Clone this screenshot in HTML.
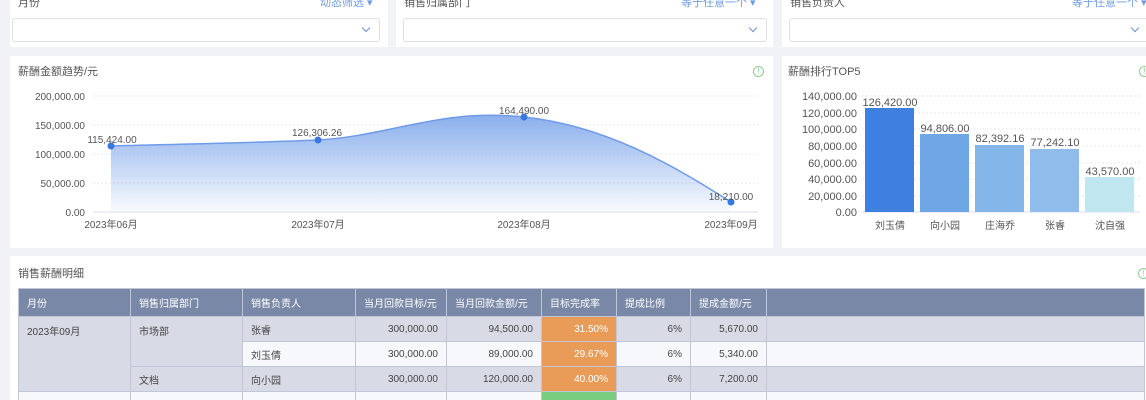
<!DOCTYPE html>
<html style="width:1146px;height:400px;overflow:hidden"><head><meta charset="utf-8"><style>
*{margin:0;padding:0;box-sizing:border-box}
body{width:1146px;height:400px;overflow:hidden;background:#f0f2f5;font-family:"Liberation Sans","Noto Sans CJK SC",sans-serif;position:relative;color:#333}
.card{position:absolute;background:#fff}
.a{position:absolute;white-space:nowrap}
.sel{position:absolute;height:24px;border:1px solid #dcdfe6;border-radius:3px;background:#fff}
.sel::after{content:"";position:absolute;right:10px;top:6px;width:5px;height:5px;border-right:1.5px solid #6b8fd6;border-bottom:1.5px solid #6b8fd6;transform:rotate(45deg)}
.t{font-size:11px;color:#555}
.blue{color:#6f9be0;font-size:11px}
.info{position:absolute;width:11px;height:11px;border:1.3px solid #8ccf8c;border-radius:50%;font-size:8px;color:#8ccf8c;text-align:center;line-height:9px}
table{position:absolute;left:18px;top:288px;border-collapse:collapse;font-size:10px;color:#444}
td{border:1px solid #c0c6d6;height:25px;padding:0 8px;vertical-align:middle}
th{background:#7a88a8;color:#fff;font-weight:normal;text-align:left;height:28px;padding:0 8px;border:1px solid #c0c6d6}
.g{background:#d8dbe6}.w{background:#f7f8fb}
.r{text-align:right}
.o{background:#e89c58;color:#fff;text-align:right}
</style></head><body>
<div class="card" style="left:10px;top:0;width:378px;height:47px">
<div class="a t" style="left:8px;top:-6px">月份</div><div class="a blue" style="left:310px;top:-6px">动态筛选 ▾</div>
<div class="sel" style="left:2px;top:18px;width:368px"></div></div>
<div class="card" style="left:396px;top:0;width:377px;height:47px">
<div class="a t" style="left:8px;top:-6px">销售归属部门</div><div class="a blue" style="left:285px;top:-6px">等于任意一个 ▾</div>
<div class="sel" style="left:7px;top:18px;width:364px"></div></div>
<div class="card" style="left:782px;top:0;width:364px;height:47px">
<div class="a t" style="left:8px;top:-6px">销售负责人</div><div class="a blue" style="left:290px;top:-6px">等于任意一个 ▾</div>
<div class="sel" style="left:7px;top:18px;width:360px"></div></div>

<div class="card" style="left:10px;top:56px;width:763px;height:192px">
<div class="a t" style="left:8px;top:7px">薪酬金额趋势/元</div><div class="info" style="left:743px;top:10px">!</div></div>
<div class="card" style="left:782px;top:56px;width:364px;height:192px">
<div class="a t" style="left:6px;top:7px">薪酬排行TOP5</div><div class="info" style="left:357px;top:10px">!</div></div>

<svg class="a" style="left:0;top:0" width="1146" height="250" font-family="Liberation Sans, Noto Sans CJK SC, sans-serif" font-size="10" fill="#555">
<defs><linearGradient id="gr" x1="0" y1="0" x2="0" y2="1"><stop offset="0" stop-color="#7ea6ea" stop-opacity=".9"/><stop offset="1" stop-color="#7ea6ea" stop-opacity=".05"/></linearGradient></defs>
<g stroke="#e6e8ee" stroke-dasharray="2,2"><line x1="93" y1="96" x2="758" y2="96"/><line x1="93" y1="125" x2="758" y2="125"/><line x1="93" y1="154" x2="758" y2="154"/><line x1="93" y1="183" x2="758" y2="183"/></g>
<line x1="93" y1="212" x2="758" y2="212" stroke="#dde"/>
<g text-anchor="end"><text x="85" y="100">200,000.00</text><text x="85" y="129">150,000.00</text><text x="85" y="158">100,000.00</text><text x="85" y="187">50,000.00</text><text x="85" y="216">0.00</text></g>
<path d="M111,146 C180,144 250,143 318,140 C390,136 440,108 524,117 C610,126 680,170 731,202 L731,212 L111,212Z" fill="url(#gr)"/>
<path d="M111,146 C180,144 250,143 318,140 C390,136 440,108 524,117 C610,126 680,170 731,202" fill="none" stroke="#6f9be8" stroke-width="1.5"/>
<g fill="#3a78e0"><circle cx="111" cy="146" r="3.5"/><circle cx="318" cy="140" r="3.5"/><circle cx="524" cy="117" r="3.5"/><circle cx="731" cy="202" r="3.5"/></g>
<g text-anchor="middle"><text x="112" y="143">115,424.00</text><text x="317" y="136">126,306.26</text><text x="524" y="114">164,490.00</text><text x="731" y="200">18,210.00</text>
<text x="111" y="228">2023年06月</text><text x="318" y="228">2023年07月</text><text x="524" y="228">2023年08月</text><text x="731" y="228">2023年09月</text></g>
<g stroke="#e6e8ee" stroke-dasharray="2,2"><line x1="862" y1="96" x2="1140" y2="96"/><line x1="862" y1="113" x2="1140" y2="113"/><line x1="862" y1="129" x2="1140" y2="129"/><line x1="862" y1="146" x2="1140" y2="146"/><line x1="862" y1="163" x2="1140" y2="163"/><line x1="862" y1="179" x2="1140" y2="179"/><line x1="862" y1="196" x2="1140" y2="196"/></g>
<line x1="862" y1="212" x2="1140" y2="212" stroke="#dde"/>
<g text-anchor="end" font-size="11"><text x="857" y="100">140,000.00</text><text x="857" y="117">120,000.00</text><text x="857" y="133">100,000.00</text><text x="857" y="150">80,000.00</text><text x="857" y="167">60,000.00</text><text x="857" y="183">40,000.00</text><text x="857" y="200">20,000.00</text><text x="857" y="216">0.00</text></g>
<rect x="865" y="108" width="49" height="104" fill="#3f7fe0"/><rect x="920" y="134" width="49" height="78" fill="#6fa6e6"/><rect x="975" y="145" width="49" height="67" fill="#85b6ea"/><rect x="1030" y="149" width="49" height="63" fill="#8fbcea"/><rect x="1085" y="177" width="49" height="35" fill="#c0e6f0"/>
<g text-anchor="middle" font-size="11"><text x="890" y="106">126,420.00</text><text x="945" y="132">94,806.00</text><text x="1000" y="142">82,392.16</text><text x="1055" y="146">77,242.10</text><text x="1110" y="175">43,570.00</text></g>
<g text-anchor="middle"><text x="890" y="229">刘玉倩</text><text x="945" y="229">向小园</text><text x="1000" y="229">庄海乔</text><text x="1055" y="229">张睿</text><text x="1110" y="229">沈自强</text></g>
</svg>

<div class="card" style="left:10px;top:256px;width:1136px;height:144px">
<div class="a t" style="left:8px;top:9px">销售薪酬明细</div><div class="info" style="left:1128px;top:12px">!</div></div>
<table>
<tr><th style="width:112px">月份</th><th style="width:112px">销售归属部门</th><th style="width:113px">销售负责人</th><th style="width:91px">当月回款目标/元</th><th style="width:95px">当月回款金额/元</th><th style="width:75px">目标完成率</th><th style="width:74px">提成比例</th><th style="width:76px">提成金额/元</th><th style="width:378px"></th></tr>
<tr><td class="g" rowspan="3" style="vertical-align:top;padding-top:6px">2023年09月</td><td class="g" rowspan="2" style="vertical-align:top;padding-top:6px">市场部</td><td class="g">张睿</td><td class="g r">300,000.00</td><td class="g r">94,500.00</td><td class="o">31.50%</td><td class="g r">6%</td><td class="g r">5,670.00</td><td class="g"></td></tr>
<tr><td class="w">刘玉倩</td><td class="w r">300,000.00</td><td class="w r">89,000.00</td><td class="o">29.67%</td><td class="w r">6%</td><td class="w r">5,340.00</td><td class="w"></td></tr>
<tr><td class="g">文档</td><td class="g">向小园</td><td class="g r">300,000.00</td><td class="g r">120,000.00</td><td class="o">40.00%</td><td class="g r">6%</td><td class="g r">7,200.00</td><td class="g"></td></tr>
<tr><td class="w"></td><td class="w"></td><td class="w"></td><td class="w"></td><td class="w"></td><td style="background:#78cc80"></td><td class="w"></td><td class="w"></td><td class="w"></td></tr>
</table>
</body></html>
